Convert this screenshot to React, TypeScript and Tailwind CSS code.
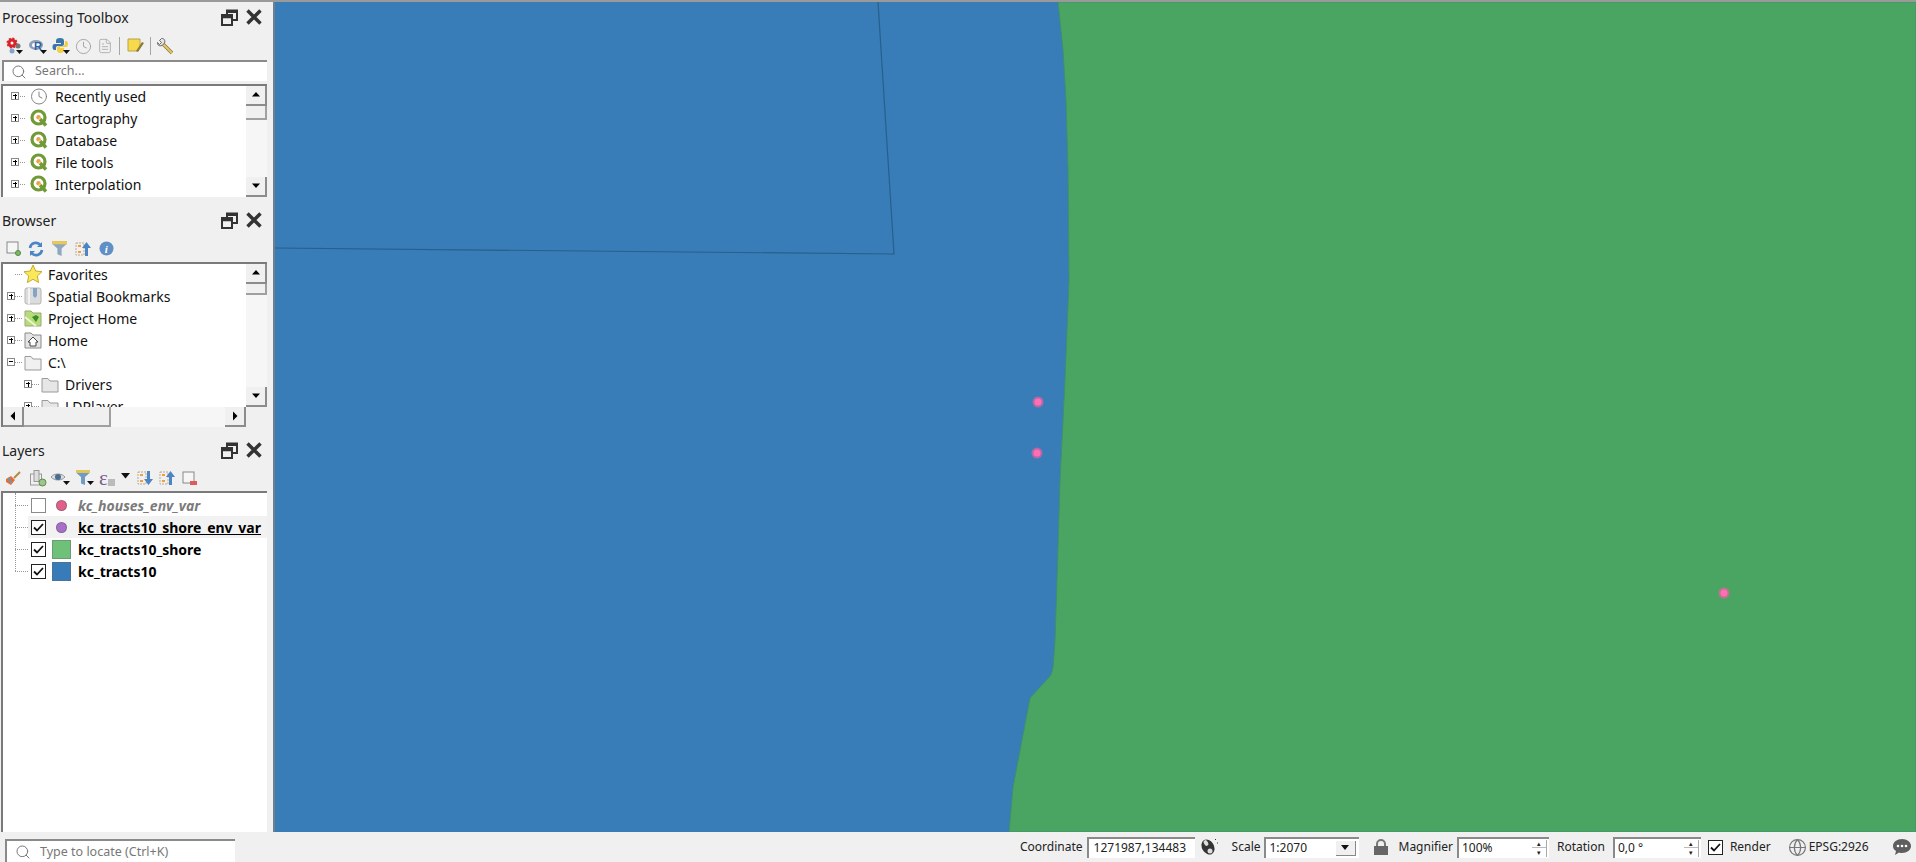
// App.tsx - QGIS main window with map canvas
import type { ReactNode } from "react";
import { Clock, FileText, Search, Globe } from "lucide-react";

const FONT = "font-['Noto_Sans','Open_Sans',sans-serif]";

function DockButtons() {
  return (
    <div className="flex items-center gap-[8px]">
      <svg width="17" height="17" viewBox="0 0 17 17" fill="none" stroke="#333" strokeWidth="2">
        <rect x="1" y="6" width="10" height="10" fill="#f0f0f0" />
        <path d="M1 8h10" strokeWidth="2.5" />
        <path d="M6 5V1.5h10V11h-4.500" />
        <path d="M6 3h10" strokeWidth="2" />
      </svg>
      <svg width="16" height="16" viewBox="0 0 16 16" stroke="#333" strokeWidth="3.400">
        <path d="M1.500 1.500l13 13M14.500 1.500l-13 13" />
      </svg>
    </div>
  );
}

function DockTitle({ title, className }: { title: string; className: string }) {
  return (
    <div className={`flex items-center justify-between pl-[2px] pr-[11px] text-[14px] text-[#222] ${className}`}>
      <span>{title}</span>
      <DockButtons />
    </div>
  );
}

function Expander({ minus = false }: { minus?: boolean }) {
  return (
    <span className="relative block h-[8px] w-[8px] shrink-0 border border-[#8a8a8a] bg-white">
      <span className="absolute left-[1px] top-[2px] h-[1px] w-[4px] bg-black" />
      {!minus && <span className="absolute left-[2.500px] top-[0.500px] h-[5px] w-[1px] bg-black" />}
    </span>
  );
}

function ArrowBtn({ dir, className = "" }: { dir: "up" | "down" | "left" | "right"; className?: string }) {
  const tri = {
    up: "M1 6.500L5 2l4 4.500z",
    down: "M1 2.500L5 7l4-4.500z",
    left: "M7 0.500L2.500 5 7 9.500z",
    right: "M3 0.500L7.500 5 3 9.500z",
  }[dir];
  return (
    <div className={`flex shrink-0 items-center justify-center border-b-2 border-r-2 border-b-[#8c8c8c] border-r-[#8c8c8c] bg-[#f0f0f0] ${className}`}>
      <svg width="10" height="10" viewBox="0 0 10 10">
        <path d={tri} fill="#000" />
      </svg>
    </div>
  );
}

function VScroll({ thumb }: { thumb: string }) {
  return (
    <div className="flex w-[21px] shrink-0 flex-col bg-[#f6f6f6]">
      <ArrowBtn dir="up" className="h-[20px] w-[21px]" />
      <div className={`w-[21px] border-b-2 border-r-2 border-b-[#a0a0a0] border-r-[#a0a0a0] bg-[#f0f0f0] ${thumb}`} />
      <div className="flex-1" />
      <ArrowBtn dir="down" className="h-[20px] w-[21px]" />
    </div>
  );
}

function QgisIcon() {
  return (
    <svg width="18" height="18" viewBox="0 0 18 18" fill="none">
      <circle cx="8.500" cy="8.500" r="6.500" stroke="#6f9a35" strokeWidth="3.200" />
      <path d="M10 10l6 6.500" stroke="#6f9a35" strokeWidth="3.400" />
      <circle cx="8.500" cy="8.200" r="2.200" fill="#ef9a55" />
      <circle cx="9.500" cy="9.500" r="1" fill="#f3d34a" />
    </svg>
  );
}

function ClockIcon() {
  return <Clock size={19} strokeWidth={1.200} color="#777" />;
}

function ToolRow({ icon, label }: { icon: ReactNode; label: string }) {
  return (
    <div className="flex h-[22px] items-center pl-[8px]">
      <Expander />
      <span className="ml-[1px] w-[5px] border-t border-dotted border-[#999]" />
      <span className="ml-[5px] flex w-[18px] items-center">{icon}</span>
      <span className="ml-[7px] text-[14px] text-[#111]">{label}</span>
    </div>
  );
}

function FolderIcon({ shade = "#e6e6e6" }: { shade?: string }) {
  return (
    <svg width="18" height="17" viewBox="0 0 18 17" fill={shade} stroke="#9a9a9a" strokeWidth="1">
      <path d="M1 2.500h6l2 2.500h8v11H1z" />
    </svg>
  );
}

function BrowserRow({ icon, label, expander, minus, level = 0 }: { icon: ReactNode; label: string; expander?: boolean; minus?: boolean; level?: number }) {
  return (
    <div className={`flex h-[22px] items-center ${level === 1 ? "pl-[21px]" : "pl-[4px]"}`}>
      <span className="flex w-[8px] justify-center">{expander ? <Expander minus={minus} /> : null}</span>
      <span className="w-[7px] border-t border-dotted border-[#999]" />
      <span className="ml-[1px] flex w-[20px] items-center justify-center">{icon}</span>
      <span className="ml-[5px] text-[14px] text-[#111]">{label}</span>
    </div>
  );
}

function Check({ checked = true }: { checked?: boolean }) {
  return (
    <span className={`flex h-[15px] w-[15px] shrink-0 items-center justify-center border bg-white ${checked ? "border-[#222]" : "border-[#8a8a8a]"}`}>
      {checked && (
        <svg width="11" height="11" viewBox="0 0 11 11" fill="none" stroke="#111" strokeWidth="1.800">
          <path d="M1 5.500l3 3 6-6.500" />
        </svg>
      )}
    </span>
  );
}

function LayerRow({ symbol, label, checked, text, active }: { symbol: ReactNode; label: string; checked?: boolean; text: string; active?: boolean }) {
  return (
    <div className="flex h-[22px] items-center pl-[12px]">
      <span className="h-0 w-[13px] border-t border-dotted border-[#999]" />
      <div className={`flex h-[22px] flex-1 items-center pl-[3px] ${active ? "bg-[#f2f2f2]" : ""}`}>
        <Check checked={checked} />
        <span className="ml-[6px] flex w-[19px] shrink-0 items-center justify-center">{symbol}</span>
        <span className={`ml-[7px] whitespace-nowrap text-[14px] ${text}`}>{label}</span>
      </div>
    </div>
  );
}

function Square({ color }: { color: string }) {
  return <span className="block h-[19px] w-[19px] border border-[#666]/40" style={{ backgroundColor: color }} />;
}

function Dot({ color }: { color: string }) {
  return <span className="block h-[11px] w-[11px] rounded-full border border-[#555]/40" style={{ backgroundColor: color }} />;
}

function Separator({ className = "" }: { className?: string }) {
  return <span className={`h-[18px] w-[1px] bg-[#a5a5a5] ${className}`} />;
}

function ToolboxBar() {
  return (
    <div className="flex h-[28px] items-center gap-[5px] pl-[5px]">
      <svg width="18" height="18" viewBox="0 0 18 18">
        <circle cx="7" cy="6" r="4.500" fill="#d8232a" stroke="#d8232a" strokeWidth="2" strokeDasharray="2 1.500" />
        <circle cx="7" cy="6" r="1.500" fill="#fff" />
        <circle cx="13" cy="9" r="2.500" fill="#777" />
        <circle cx="7" cy="14" r="2.500" fill="#7fa6d0" />
        <path d="M11 13h7l-3.500 4z" fill="#111" />
      </svg>
      <svg width="19" height="18" viewBox="0 0 19 18">
        <ellipse cx="8" cy="8" rx="7" ry="5" fill="#8d9fb5" />
        <ellipse cx="8" cy="8" rx="4" ry="2.600" fill="#fff" />
        <text x="6" y="13" fontSize="11" fontWeight="700" fill="#2a62a8" fontFamily="Liberation Sans">R</text>
        <path d="M12 13h7l-3.500 4z" fill="#111" />
      </svg>
      <svg width="18" height="18" viewBox="0 0 18 18">
        <path d="M8 1c-3 0-4 1-4 3v2h5v1H2.500C1 7 .5 8.500.5 10s.5 3 2 3H4v-2c0-1.500 1-2 2.500-2H10c1 0 2-1 2-2V4c0-2-1-3-4-3z" fill="#3b77ab" />
        <path d="M8 16c3 0 4-1 4-3v-2H8v-1h6c1.500 0 2-1.500 2-3s-.5-3-2-3h-1v2c0 1.500-1 3-2.500 3H7c-1 0-2 1-2 2v2c0 2 1 3 3 3z" fill="#f5cd45" />
        <path d="M11 13h7l-3.500 4z" fill="#111" />
      </svg>
      <Clock size={17} strokeWidth={1.200} color="#999" />
      <FileText size={16} strokeWidth={1.300} color="#aaa" />
      <Separator className="ml-[1px]" />
      <svg width="18" height="18" viewBox="0 0 18 18" className="ml-[2px]">
        <path d="M1 2h12v8l-3 4H1z" fill="#f7d94c" stroke="#b9a24a" />
        <path d="M9 14l6-9 2 1-6 9z" fill="#8a7a3a" />
      </svg>
      <Separator />
      <svg width="18" height="18" viewBox="0 0 18 18" fill="none">
        <path d="M7 7l9 9" stroke="#8a7a3a" strokeWidth="3.600" />
        <path d="M7 7l9 9" stroke="#e3c76a" strokeWidth="2" />
        <path d="M5.500 1.500L3.500 3.500l2 2-2 2-2-2C1 8 3.500 9.500 6 8.500L8.500 6C9.500 3.500 8 1 5.500 1.500z" fill="#e4e4e4" stroke="#666" strokeWidth="1" />
      </svg>
    </div>
  );
}

function BrowserBar() {
  return (
    <div className="flex h-[27px] items-center gap-[7px] pl-[6px]">
      <svg width="15" height="15" viewBox="0 0 15 15" fill="none">
        <rect x="1" y="1" width="11" height="11" fill="#f6f6f6" stroke="#888" />
        <circle cx="12" cy="12" r="2.500" fill="#83b56a" stroke="#4d8a3c" />
      </svg>
      <svg width="16" height="16" viewBox="0 0 16 16" fill="none" stroke="#4a85c5" strokeWidth="2.600">
        <path d="M2 7a6 6 0 0 1 10.500-3M14 9A6 6 0 0 1 3.500 12" />
        <path d="M14 1v5H9z" fill="#4a85c5" strokeWidth="0" />
        <path d="M2 15v-5h5z" fill="#4a85c5" strokeWidth="0" />
      </svg>
      <svg width="17" height="17" viewBox="0 0 16 16">
        <path d="M1 1h14v2.500L10 8v7l-4-1.500V8L1 3.500z" fill="#8fa8c0" />
        <rect x="1" y="1" width="14" height="3" fill="#e9c95a" />
      </svg>
      <svg width="17" height="16" viewBox="0 0 17 16" fill="none">
        <rect x="1" y="2" width="8" height="12" stroke="#bba98a" strokeDasharray="2 1" />
        <rect x="3" y="4" width="3" height="2" fill="#f0a040" />
        <rect x="3" y="10" width="3" height="2" fill="#f0a040" />
        <path d="M11.500 1L16 7h-3v8h-3V7H7z" fill="#4a85c5" />
      </svg>
      <svg width="15" height="15" viewBox="0 0 15 15">
        <circle cx="7.500" cy="7.500" r="7" fill="#5f8fc4" />
        <text x="5.800" y="11.500" fontSize="11" fontWeight="700" fontStyle="italic" fill="#fff" fontFamily="Liberation Serif">i</text>
      </svg>
    </div>
  );
}

function LayersBar() {
  return (
    <div className="flex h-[26px] items-center gap-[4px] pl-[5px]">
      <svg width="16" height="16" viewBox="0 0 16 16">
        <path d="M9 8l6-6" stroke="#b58a3a" strokeWidth="2" />
        <path d="M1 9l5-3 4 4-4 5-5-3z" fill="#e0703a" />
        <path d="M3 8l4 5" stroke="#5a9ad0" strokeWidth="1.500" />
      </svg>
      <svg width="18" height="18" viewBox="0 0 18 18" fill="none" className="ml-[4px]">
        <rect x="1.500" y="5" width="11" height="11" stroke="#999" />
        <rect x="5" y="1.500" width="5" height="11" fill="#ddd" stroke="#999" />
        <circle cx="13.500" cy="13.500" r="3.500" fill="#9fc48e" stroke="#5a8f48" />
      </svg>
      <svg width="20" height="16" viewBox="0 0 20 16">
        <path d="M0 7c3-4 11-4 14 0-3 4-11 4-14 0z" fill="#d6dde4" stroke="#999" />
        <circle cx="7" cy="7" r="3" fill="#4a6c90" />
        <path d="M12 11h7l-3.500 4z" fill="#111" />
      </svg>
      <svg width="20" height="18" viewBox="0 0 20 18">
        <path d="M1 1h14v2.500L10 8v8l-4-1.500V8L1 3.500z" fill="#6f9cc5" />
        <rect x="1" y="1" width="14" height="3" fill="#e2c556" />
        <path d="M12 12h7l-3.500 4z" fill="#111" />
      </svg>
      <span className="flex w-[32px] items-center">
        <span className="font-['Liberation_Serif'] text-[21px] leading-none text-[#7a5b8c]">&#949;</span>
        <span className="mt-[8px] block h-[7px] w-[7px] bg-[#bbb]" />
        <svg width="10" height="6" viewBox="0 0 10 6" className="ml-[6px] mb-[4px]"><path d="M0 0h9L4.500 5.500z" fill="#111" /></svg>
      </span>
      <svg width="17" height="16" viewBox="0 0 17 16" fill="none" className="ml-[2px]">
        <rect x="1" y="2" width="8" height="12" stroke="#bba98a" strokeDasharray="2 1" />
        <rect x="3" y="4" width="3" height="2" fill="#f0a040" />
        <rect x="3" y="10" width="3" height="2" fill="#f0a040" />
        <path d="M11.500 15L16 9h-3V1h-3v8H7z" fill="#4a85c5" />
      </svg>
      <svg width="17" height="16" viewBox="0 0 17 16" fill="none" className="ml-[1px]">
        <rect x="1" y="2" width="8" height="12" stroke="#bba98a" strokeDasharray="2 1" />
        <rect x="3" y="4" width="3" height="2" fill="#f0a040" />
        <rect x="3" y="10" width="3" height="2" fill="#f0a040" />
        <path d="M11.500 1L16 7h-3v8h-3V7H7z" fill="#4a85c5" />
      </svg>
      <svg width="15" height="15" viewBox="0 0 15 15" fill="none" className="ml-[2px]">
        <rect x="1" y="1" width="11" height="11" fill="#f6f6f6" stroke="#888" />
        <rect x="8" y="10" width="7" height="4" fill="#e05a5a" />
      </svg>
    </div>
  );
}

function Sidebar() {
  return (
    <aside className="flex w-[273px] shrink-0 flex-col">
      <DockTitle title="Processing Toolbox" className="h-[30px]" />
      <ToolboxBar />
      <div className="mx-[2px] flex h-[21px] w-[265px] items-center border-l-2 border-t-2 border-l-[#8a8a8a] border-t-[#8a8a8a] bg-white pl-[7px] text-[12.500px] text-[#777]">
        <Search size={16} strokeWidth={1.500} color="#777" />
        <span className="ml-[8px]">Search...</span>
      </div>
      <div className="mx-[1px] mt-[3px] flex h-[113px] w-[266px] overflow-hidden border-l-2 border-t-2 border-l-[#7a7a7a] border-t-[#7a7a7a] bg-white">
        <div className="-mt-[1px] flex-1">
          <ToolRow icon={<ClockIcon />} label="Recently used" />
          <ToolRow icon={<QgisIcon />} label="Cartography" />
          <ToolRow icon={<QgisIcon />} label="Database" />
          <ToolRow icon={<QgisIcon />} label="File tools" />
          <ToolRow icon={<QgisIcon />} label="Interpolation" />
        </div>
        <VScroll thumb="h-[14px]" />
      </div>

      <DockTitle title="Browser" className="mt-[8px] h-[30px]" />
      <BrowserBar />
      <div className="mx-[1px] flex h-[165px] w-[266px] flex-col overflow-hidden border-l-2 border-t-2 border-l-[#7a7a7a] border-t-[#7a7a7a] bg-white">
        <div className="flex min-h-0 flex-1">
          <div className="-mt-[1px] flex-1 overflow-hidden">
            <BrowserRow
              icon={
                <svg width="20" height="20" viewBox="0 0 20 20">
                  <path d="M10 1l2.700 6 6.300.7-4.700 4.300 1.300 6.500L10 15.300 4.400 18.500 5.700 12 1 7.700 7.300 7z" fill="#f9e85c" stroke="#c9a92c" />
                </svg>
              }
              label="Favorites"
            />
            <BrowserRow
              expander
              icon={
                <svg width="18" height="18" viewBox="0 0 18 18">
                  <rect x="1" y="1" width="16" height="16" rx="2" fill="#dcdcdc" stroke="#b5b5b5" />
                  <rect x="4" y="1" width="2" height="16" fill="#f2f2f2" />
                  <path d="M9 1h4v8l-2 2-2-2z" fill="#88a4c4" />
                </svg>
              }
              label="Spatial Bookmarks"
            />
            <BrowserRow
              expander
              icon={
                <svg width="18" height="17" viewBox="0 0 18 17">
                  <path d="M1 1h6l2 2h8v13H1z" fill="#b7dc7a" stroke="#9aa87a" />
                  <path d="M1 7l11 9" stroke="#eef5d0" strokeWidth="2" />
                  <path d="M8 7l4-2 3 2-3 5z" fill="#3b8a2c" />
                </svg>
              }
              label="Project Home"
            />
            <BrowserRow
              expander
              icon={
                <svg width="18" height="17" viewBox="0 0 18 17">
                  <path d="M1 1h6l2 2h8v13H1z" fill="#e4e4e4" stroke="#8a8a8a" />
                  <path d="M4 10l5-5 5 5h-2v4H6v-4z" fill="#fff" stroke="#444" />
                </svg>
              }
              label="Home"
            />
            <BrowserRow expander minus icon={<FolderIcon shade="#f0f0f0" />} label="C:\" />
            <BrowserRow level={1} expander icon={<FolderIcon />} label="Drivers" />
            <BrowserRow level={1} expander icon={<FolderIcon />} label="LDPlayer" />
          </div>
          <VScroll thumb="h-[11px]" />
        </div>
        <div className="flex h-[20px] shrink-0 bg-[#f6f6f6]">
          <ArrowBtn dir="left" className="w-[21px]" />
          <div className="w-[87px] border-b-2 border-r-2 border-b-[#a0a0a0] border-r-[#a0a0a0] bg-[#f0f0f0]" />
          <div className="flex-1" />
          <ArrowBtn dir="right" className="w-[21px]" />
          <div className="w-[21px] bg-[#f0f0f0]" />
        </div>
      </div>

      <DockTitle title="Layers" className="mt-[8px] h-[30px]" />
      <LayersBar />
      <div className="relative mx-[1px] w-[266px] flex-1 overflow-hidden border-l-2 border-t-2 border-l-[#7a7a7a] border-t-[#7a7a7a] bg-white pt-[1px]">
        <span className="absolute left-[12px] top-0 h-[78px] border-l border-dotted border-[#999]" />
        <LayerRow symbol={<Dot color="#e0608a" />} label="kc_houses_env_var" checked={false} text="font-bold italic text-[#7b7b7b]" />
        <LayerRow symbol={<Dot color="#a76fc7" />} label="kc_tracts10_shore_env_var" text="font-bold text-black underline" active />
        <LayerRow symbol={<Square color="#6fc17a" />} label="kc_tracts10_shore" text="font-bold text-black" />
        <LayerRow symbol={<Square color="#377cb8" />} label="kc_tracts10" text="font-bold text-black" />
      </div>
    </aside>
  );
}

function MapCanvas() {
  return (
    <main className="relative min-w-0 flex-1 border-l-2 border-[#6f7f8e] bg-[#387cb8]">
      <svg className="block h-full w-full" viewBox="275 2 1641 830" preserveAspectRatio="none">
        <path
          d="M1058 2L1063 50L1066 100L1068 170L1069 280L1065 380L1060 480L1057 580L1055 640L1053 668L1051 675L1030 698L1022 740L1013 787L1009 832H1916V2Z"
          fill="#4aa562"
          stroke="#3f8f6f"
          strokeWidth="1"
        />
        <path d="M878 2L894 254L275 248" fill="none" stroke="#27608a" strokeWidth="1.200" />
        {[
          [1038, 402],
          [1037, 453],
          [1724, 593],
        ].map(([cx, cy]) => (
          <g key={cx}>
            <circle cx={cx} cy={cy} r="5.500" fill="#e9619f" opacity="0.7" />
            <circle cx={cx} cy={cy} r="3.500" fill="#ff6fb5" />
          </g>
        ))}
      </svg>
    </main>
  );
}

function SunkenField({ children, className }: { children: ReactNode; className: string }) {
  return (
    <div className={`flex h-[21px] shrink-0 items-center whitespace-nowrap border-l-2 border-t-2 border-l-[#8a8a8a] border-t-[#8a8a8a] bg-white ${className}`}>
      {children}
    </div>
  );
}

function Spinner() {
  return (
    <span className="ml-auto mr-[2px] flex h-[17px] w-[15px] flex-col border-r border-[#aaa] text-[#222]">
      <span className="flex h-1/2 items-center justify-center border-b border-[#bbb] text-[7px] leading-none">&#9652;</span>
      <span className="flex h-1/2 items-center justify-center text-[7px] leading-none">&#9662;</span>
    </span>
  );
}

function StatusBar() {
  return (
    <footer className="flex h-[30px] shrink-0 items-center whitespace-nowrap bg-[#f0f0f0] text-[12px] text-[#222]">
      <div className="ml-[5px] mt-[8px] flex h-[24px] w-[230px] shrink-0 items-center border-l-2 border-t-2 border-l-[#8a8a8a] border-t-[#8a8a8a] bg-white pl-[8px] text-[12.500px] text-[#777]">
        <Search size={16} strokeWidth={1.500} color="#777" />
        <span className="ml-[9px]">Type to locate (Ctrl+K)</span>
      </div>

      <span className="ml-[785px] shrink-0">Coordinate</span>
      <SunkenField className="ml-[4px] w-[108px] pl-[5px]">1271987,134483</SunkenField>
      <svg width="20" height="20" viewBox="0 0 20 20" className="ml-[4px] shrink-0">
        <ellipse cx="9" cy="10" rx="6" ry="8" transform="rotate(-30 9 10)" fill="#333" />
        <ellipse cx="7" cy="6" rx="2" ry="3" transform="rotate(-30 7 6)" fill="#ddd" />
        <circle cx="11" cy="14" r="2.500" fill="#ddd" />
        <path d="M16 2l1 1M18 6h1" stroke="#333" />
      </svg>
      <span className="ml-[13px] shrink-0">Scale</span>
      <SunkenField className="ml-[3px] w-[95px] justify-between pl-[4px]">
        1:2070
        <span className="mr-[3px] flex h-[15px] w-[20px] items-center justify-center border-b border-r border-[#888] bg-[#f0f0f0]">
          <svg width="8" height="5" viewBox="0 0 8 5"><path d="M0 0h8L4 5z" fill="#111" /></svg>
        </span>
      </SunkenField>
      <svg width="18" height="18" viewBox="0 0 18 18" className="ml-[13px] shrink-0" fill="none">
        <path d="M5 9V6a4 4 0 0 1 8 0v3" stroke="#777" strokeWidth="2" />
        <rect x="2" y="8" width="14" height="9" fill="#666" />
      </svg>
      <span className="ml-[9px] shrink-0">Magnifier</span>
      <SunkenField className="ml-[4px] w-[92px] pl-[3px]">
        100%
        <Spinner />
      </SunkenField>
      <span className="ml-[8px] shrink-0">Rotation</span>
      <SunkenField className="ml-[8px] w-[88px] pl-[3px]">
        0,0 °
        <Spinner />
      </SunkenField>
      <span className="ml-[7px] shrink-0">
        <Check />
      </span>
      <span className="ml-[7px] shrink-0">Render</span>
      <Globe size={19} strokeWidth={1.500} color="#777" className="ml-[17px] shrink-0" />
      <span className="ml-[2px] shrink-0">EPSG:2926</span>
      <svg width="20" height="18" viewBox="0 0 20 18" className="ml-[23px] shrink-0">
        <path d="M10 1c5 0 9 3 9 7s-4 7-9 7c-1 0-2 0-3-.5L3 17l1-4C2 12 1 10 1 8c0-4 4-7 9-7z" fill="#5e5e5e" />
        <circle cx="6" cy="8" r="1.300" fill="#fff" />
        <circle cx="10" cy="8" r="1.300" fill="#fff" />
        <circle cx="14" cy="8" r="1.300" fill="#fff" />
      </svg>
    </footer>
  );
}

export default function App() {
  return (
    <div className={`flex h-[862px] w-[1916px] flex-col overflow-hidden bg-[#f0f0f0] ${FONT}`}>
      <div className="h-[2px] shrink-0 bg-[#9a9a9a]" />
      <div className="flex min-h-0 flex-1">
        <Sidebar />
        <MapCanvas />
      </div>
      <StatusBar />
    </div>
  );
}
